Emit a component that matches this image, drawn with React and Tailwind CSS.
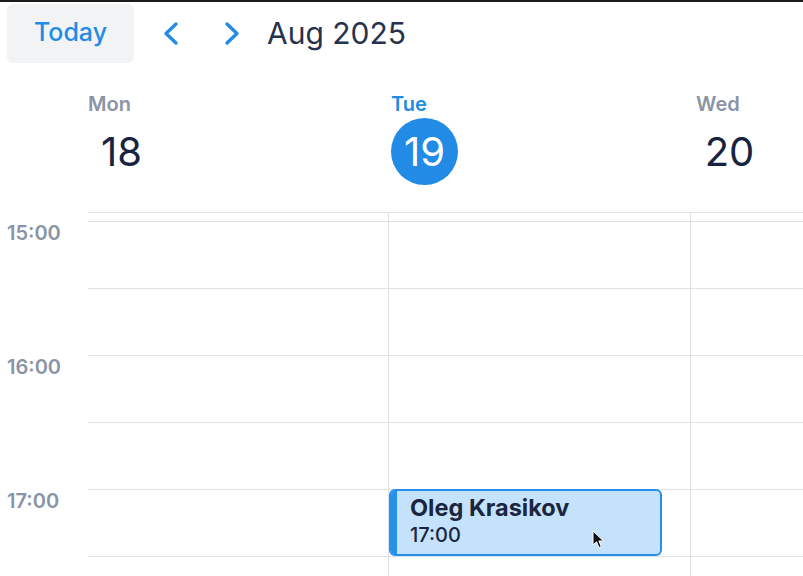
import React from 'react';

const days = [
    { name: 'Mon', num: 18 },
    { name: 'Tue', num: 19, today: true },
    { name: 'Wed', num: 20 },
];

const hours = ['15:00', '16:00', '17:00'];
const slots = [0, 1, 2, 3, 4, 5];

function Chevron({ dir }) {
    const pts = dir === 'left' ? '15,4 5,13.5 15,23' : '5,4 15,13.5 5,23';
    return (
        <svg width="20" height="27" viewBox="0 0 20 27" fill="none">
            <polyline points={pts} stroke="#228be6" strokeWidth="3.4" strokeLinecap="round" strokeLinejoin="round" />
        </svg>
    );
}

function Cursor() {
    return (
        <svg width="14" height="20" viewBox="0 0 14 20" className="absolute left-[592px] top-[528px]">
            <path d="M1 1 L1 15 L4.5 11.8 L7 17.5 L9.3 16.5 L6.9 11 L11.5 11 Z" fill="#111" stroke="#fff" strokeWidth="1" strokeLinejoin="round" />
        </svg>
    );
}

function Column({ children, last }) {
    return (
        <div className={`relative pt-[8px] ${last ? '' : 'border-r border-[#dee2e6]'}`}>
            {slots.map((s) => (
                <div key={s} className="h-[67px] border-t border-[#dee2e6]" />
            ))}
            {children}
        </div>
    );
}

export default function App() {
    return (
        <div className="relative w-[803px] h-[576px] overflow-hidden bg-white border-t-2 border-[#1c1c1c] font-['Inter',sans-serif]">
            <div className="flex items-center h-[62px] pl-[7px]">
                <button className="w-[127px] h-[59px] rounded-[6px] bg-[#f1f3f5] text-[#228be6] text-[25px] font-medium">
                    Today
                </button>
                <div className="ml-[27px]"><Chevron dir="left" /></div>
                <div className="ml-[41px]"><Chevron dir="right" /></div>
                <div className="ml-[25px] text-[30px] text-[#27334d] leading-none">Aug 2025</div>
            </div>

            <div className="grid grid-cols-[88px_303px_305px_1fr] h-[148px] pt-[28px]">
                <div />
                {days.map((d) => (
                    <div key={d.name} className="flex flex-col items-start">
                        <div className={`text-[20px] leading-[24px] font-semibold ${d.today ? 'text-[#228be6]' : 'text-[#8a94a6]'}`}>
                            {d.name}
                        </div>
                        <div className={`mt-[2px] w-[67px] h-[67px] rounded-full flex items-center justify-center text-[40px] ${d.today ? 'bg-[#228be6] text-white' : 'text-[#17233f]'}`}>
                            {d.num}
                        </div>
                    </div>
                ))}
            </div>

            <div className="flex">
                <div className="w-[88px] pt-[9px]">
                    {hours.map((h) => (
                        <div key={h} className="h-[134px] pl-[7px] text-[20px] leading-[24px] font-semibold text-[#8a94a6]">
                            {h}
                        </div>
                    ))}
                </div>
                <div className="flex-1 grid grid-cols-[301px_302px_1fr] border-t border-[#dee2e6]">
                    <Column />
                    <Column>
                        <div className="absolute left-0 top-[276px] w-[273px] h-[67px] flex rounded-[6px] border-2 border-[#2690ea] bg-[#c5e2fc] overflow-hidden">
                            <div className="w-[6px] bg-[#2690ea]" />
                            <div className="pl-[13px] pt-[3px] text-[#1b2540]">
                                <div className="text-[23.5px] leading-[28px] font-bold">Oleg Krasikov</div>
                                <div className="text-[20px] leading-[26px] font-medium">17:00</div>
                            </div>
                        </div>
                    </Column>
                    <Column last />
                </div>
            </div>

            <Cursor />
        </div>
    );
}
